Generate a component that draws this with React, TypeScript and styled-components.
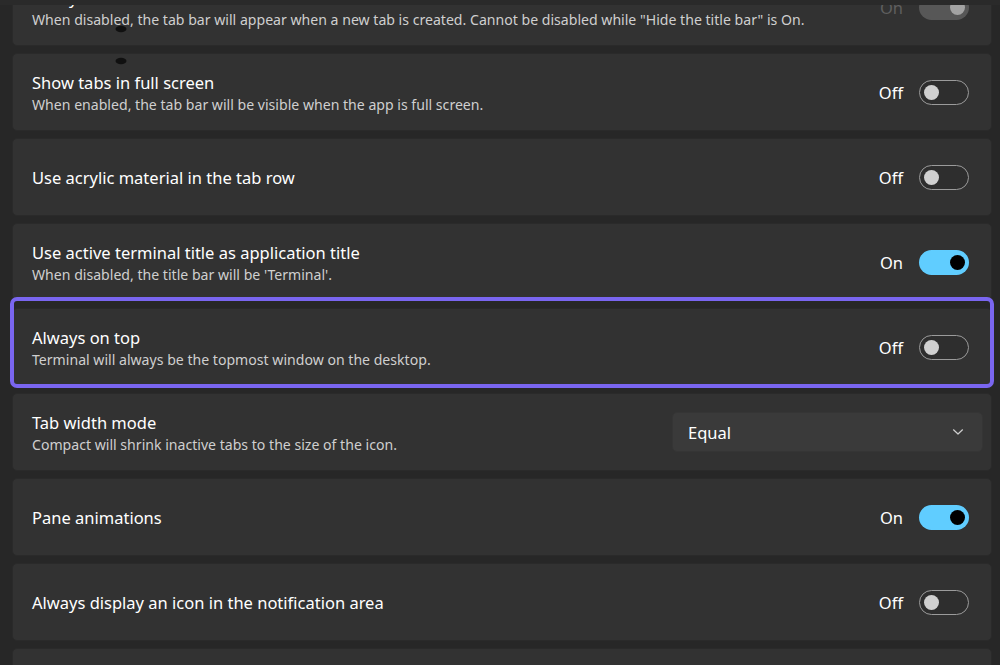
import React from "react";
import styled, { createGlobalStyle } from "styled-components";

const Global = createGlobalStyle`
  html, body { margin: 0; padding: 0; background: #272727; }
  body { font-family: "Noto Sans", "Open Sans", sans-serif; color: #fff; overflow: hidden; }
  * { box-sizing: border-box; }
`;

const Page = styled.div`
  width: 1000px;
  height: 665px;
  display: flex;
  flex-direction: column;
  background: #272727;
  overflow: hidden;
`;

const TopStrip = styled.div`
  height: 5px;
  flex: none;
  background: #2a2a2a;
`;

const Viewport = styled.div`
  flex: 1;
  overflow: hidden;
  position: relative;
`;

const List = styled.div`
  display: flex;
  flex-direction: column;
  gap: 7px;
  padding: 0 8px 0 12px;
  margin-top: -37px;
`;

const Card = styled.div`
  position: relative;
  height: 78px;
  flex: none;
  background: #323232;
  border: 1px solid #2a2a2a;
  border-radius: 5px;
  display: flex;
  align-items: center;
  padding: 0 22px 0 19px;
  gap: 16px;
`;

const FocusRing = styled.div`
  position: absolute;
  left: -3px;
  right: -3px;
  top: -12px;
  bottom: -3px;
  border: 4px solid #7a66f0;
  border-radius: 7px;
  pointer-events: none;
`;

const TextBlock = styled.div`
  flex: 1;
  display: flex;
  flex-direction: column;
  padding-top: 1px;
  min-width: 0;
`;

const Title = styled.div`
  font-size: 16.5px;
  line-height: 24px;
  color: #ffffff;
  white-space: nowrap;
`;

const Desc = styled.div`
  font-size: 14.1px;
  line-height: 20px;
  color: #cfcfcf;
  white-space: nowrap;
`;

const StateLabel = styled.span<{ $disabled?: boolean }>`
  font-size: 16.5px;
  line-height: 24px;
  padding-top: 2px;
  color: ${(p) => (p.$disabled ? "#5f5f5f" : "#ffffff")};
`;

const Track = styled.div<{ $on: boolean; $disabled?: boolean }>`
  width: 50px;
  height: 25px;
  border-radius: 13px;
  flex: none;
  display: flex;
  align-items: center;
  justify-content: ${(p) => (p.$on ? "flex-end" : "flex-start")};
  padding: 0 4px;
  background: ${(p) =>
    p.$disabled ? "#575757" : p.$on ? "#60cdff" : "rgba(0,0,0,0.08)"};
  border: ${(p) => (p.$on ? "none" : "1.3px solid #9b9b9b")};
`;

const Knob = styled.div<{ $on: boolean; $disabled?: boolean }>`
  width: 15px;
  height: 15px;
  border-radius: 50%;
  background: ${(p) => (p.$disabled ? "#a3a3a3" : p.$on ? "#000000" : "#d0d0d0")};
`;

const Select = styled.div`
  width: 311px;
  height: 40px;
  flex: none;
  margin-right: -14px;
  border-radius: 5px;
  background: #3a3a3a;
  border: 1px solid #353535;
  display: flex;
  align-items: center;
  justify-content: space-between;
  padding: 0 18px 0 15px;
  font-size: 16.5px;
  color: #fff;
`;

const Cursor = styled.svg`
  position: absolute;
  left: 113px;
  top: 20px;
  pointer-events: none;
`;

type Row = {
  title?: string;
  desc?: string;
  kind: "toggle" | "select" | "none";
  on?: boolean;
  disabled?: boolean;
  focused?: boolean;
  value?: string;
};

const rows: Row[] = [
  {
    title: "Always show tabs",
    desc: 'When disabled, the tab bar will appear when a new tab is created. Cannot be disabled while "Hide the title bar" is On.',
    kind: "toggle",
    on: true,
    disabled: true,
  },
  {
    title: "Show tabs in full screen",
    desc: "When enabled, the tab bar will be visible when the app is full screen.",
    kind: "toggle",
    on: false,
  },
  { title: "Use acrylic material in the tab row", kind: "toggle", on: false },
  {
    title: "Use active terminal title as application title",
    desc: "When disabled, the title bar will be 'Terminal'.",
    kind: "toggle",
    on: true,
  },
  {
    title: "Always on top",
    desc: "Terminal will always be the topmost window on the desktop.",
    kind: "toggle",
    on: false,
    focused: true,
  },
  {
    title: "Tab width mode",
    desc: "Compact will shrink inactive tabs to the size of the icon.",
    kind: "select",
    value: "Equal",
  },
  { title: "Pane animations", kind: "toggle", on: true },
  { title: "Always display an icon in the notification area", kind: "toggle", on: false },
  { kind: "none" },
];

const Chevron = () => (
  <svg width="12" height="8" viewBox="0 0 12 8" fill="none">
    <path d="M1.5 1.8 L6 6 L10.5 1.8" stroke="#cfcfcf" strokeWidth="1.2" strokeLinecap="round" strokeLinejoin="round" />
  </svg>
);

export default function App() {
  return (
    <Page>
      <Global />
      <TopStrip />
      <Viewport>
        <List>
          {rows.map((r, i) => (
            <Card key={i}>
              <TextBlock>
                {r.title && <Title>{r.title}</Title>}
                {r.desc && <Desc>{r.desc}</Desc>}
              </TextBlock>
              {r.kind === "toggle" && (
                <>
                  <StateLabel $disabled={r.disabled}>{r.on ? "On" : "Off"}</StateLabel>
                  <Track $on={!!r.on} $disabled={r.disabled}>
                    <Knob $on={!!r.on} $disabled={r.disabled} />
                  </Track>
                </>
              )}
              {r.kind === "select" && (
                <Select>
                  <span>{r.value}</span>
                  <Chevron />
                </Select>
              )}
              {r.focused && <FocusRing />}
            </Card>
          ))}
        </List>
        <Cursor width="16" height="44" viewBox="0 0 16 44">
          <ellipse cx="8" cy="4" rx="5.5" ry="3.2" fill="#0a0a0a" opacity="0.85" />
          <ellipse cx="8" cy="36" rx="5.5" ry="3.2" fill="#0a0a0a" opacity="0.85" />
        </Cursor>
      </Viewport>
    </Page>
  );
}
